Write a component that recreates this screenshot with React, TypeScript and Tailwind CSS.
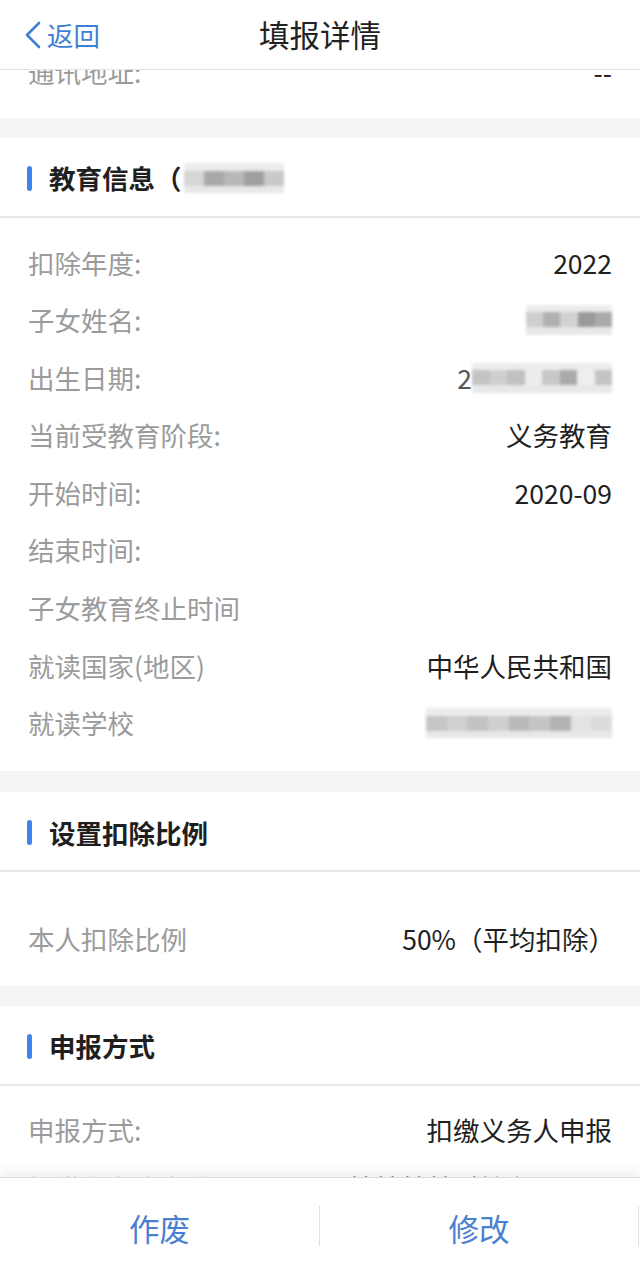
import React from 'react';

const FONT = { fontFamily: '"Noto Sans CJK SC", "Noto Sans", sans-serif' };

// Mosaic blur used where the original screenshot was censored
const Mosaic: React.FC<{ cells: string[]; className?: string }> = ({ cells, className }) => (
  <div className={`flex h-[30px] blur-[1.5px] ${className ?? ''}`}>
    {cells.map((c, i) => (
      <div key={i} className="flex-1 flex flex-col">
        <div className="h-1/4" style={{ background: '#ececec' }} />
        <div className="h-2/4" style={{ background: c }} />
        <div className="h-1/4" style={{ background: '#e8e8e8' }} />
      </div>
    ))}
  </div>
);

const Row: React.FC<{ label: string; value?: React.ReactNode }> = ({ label, value }) => (
  <div className="h-[57.6px] flex items-center justify-between px-[28px] text-[26.5px]">
    <span className="text-[#9b9b9b]">{label}</span>
    <span className="text-[#1f1f1f]">{value}</span>
  </div>
);

const SectionTitle: React.FC<{ children: React.ReactNode }> = ({ children }) => (
  <div className="h-[80px] pt-[3px] flex items-center px-[27px] border-b-2 border-[#e8e8e8]">
    <div className="w-[5px] h-[25px] rounded-full bg-[#3f84ef] mr-[17px]" />
    <div className="flex items-center text-[26.5px] font-bold text-[#1f1f1f]">{children}</div>
  </div>
);

const Gap: React.FC<{ h?: string }> = ({ h = 'h-[20px]' }) => <div className={`${h} bg-[#f4f5f7]`} />;

export default function App() {
  return (
    <div className="relative w-[640px] h-[1273px] overflow-hidden bg-white flex flex-col" style={FONT}>
      {/* Nav bar */}
      <div className="h-[70px] shrink-0 border-b border-[#e4e4e4] flex items-center relative bg-white z-10">
        <div className="flex items-center pl-[24px] text-[#3f7fd3] text-[26.5px]">
          <svg width="18" height="28" viewBox="0 0 18 28" className="mr-[5px]">
            <path d="M15 2 L3 14 L15 26" fill="none" stroke="#3f7fd3" strokeWidth="2.6" strokeLinecap="round" strokeLinejoin="round" />
          </svg>
          <span>返回</span>
        </div>
        <div className="absolute left-0 right-0 text-center text-[30.5px] text-[#222] pointer-events-none">填报详情</div>
      </div>

      {/* Scrolled content */}
      <div className="flex-1 overflow-hidden">
        <div className="-mt-[27px]">
          <div className="pb-[17px]">
            <Row label="通讯地址:" value="--" />
          </div>
          <Gap />

          <SectionTitle>
            <span>教育信息（</span>
            <Mosaic className="w-[100px] ml-[2px]" cells={['#d6d6d6', '#a9a9a9', '#b8b8b8', '#9f9f9f', '#c9c9c9']} />
          </SectionTitle>
          <div className="pt-[16px] pb-[19px]">
            <Row label="扣除年度:" value="2022" />
            <Row label="子女姓名:" value={<Mosaic className="w-[86px]" cells={['#cfcfcf', '#b0b0b0', '#d2d2d2', '#9a9a9a', '#aaaaaa']} />} />
            <Row
              label="出生日期:"
              value={
                <span className="flex items-center">
                  <span className="text-[#555]">2</span>
                  <Mosaic className="w-[140px]" cells={['#c4c4c4', '#cfcfcf', '#c1c1c1', '#ececec', '#c8c8c8', '#aaaaaa', '#eeeeee', '#c4c4c4']} />
                </span>
              }
            />
            <Row label="当前受教育阶段:" value="义务教育" />
            <Row label="开始时间:" value="2020-09" />
            <Row label="结束时间:" />
            <Row label="子女教育终止时间" />
            <Row label="就读国家(地区)" value="中华人民共和国" />
            <Row label="就读学校" value={<Mosaic className="w-[186px]" cells={['#c6c6c6', '#d0d0d0', '#c2c2c2', '#cfcfcf', '#b9b9b9', '#c5c5c5', '#b3b3b3', '#e3e3e3', '#dcdcdc']} />} />
          </div>
          <Gap h="h-[21px]" />

          <SectionTitle>设置扣除比例</SectionTitle>
          <div className="pt-[38px] pb-[18px]">
            <div className="h-[57.6px] flex items-center justify-between pl-[28px] pr-[25px] text-[26.5px]">
              <span className="text-[#9b9b9b]">本人扣除比例</span>
              <span className="text-[#1f1f1f]">50%（平均扣除）</span>
            </div>
          </div>
          <Gap />

          <SectionTitle>申报方式</SectionTitle>
          <div className="pt-[16px]">
            <Row label="申报方式:" value="扣缴义务人申报" />
            <Row label="扣缴义务人名称:" value="某某某某科技有限公司" />
          </div>
        </div>
      </div>

      {/* Bottom action bar */}
      <div className="absolute left-0 right-0 bottom-0 h-[96px] bg-white border-t border-[#dcdcdc] shadow-[0_-6px_10px_rgba(0,0,0,0.06)] flex items-center">
        <button className="w-[320px] h-[40px] border-r border-[#e2e2e2] text-[30.5px] text-[#4a80d2]">作废</button>
        <button className="w-[319px] h-[40px] border-r border-[#e2e2e2] text-[30.5px] text-[#4a80d2]">修改</button>
      </div>
    </div>
  );
}
